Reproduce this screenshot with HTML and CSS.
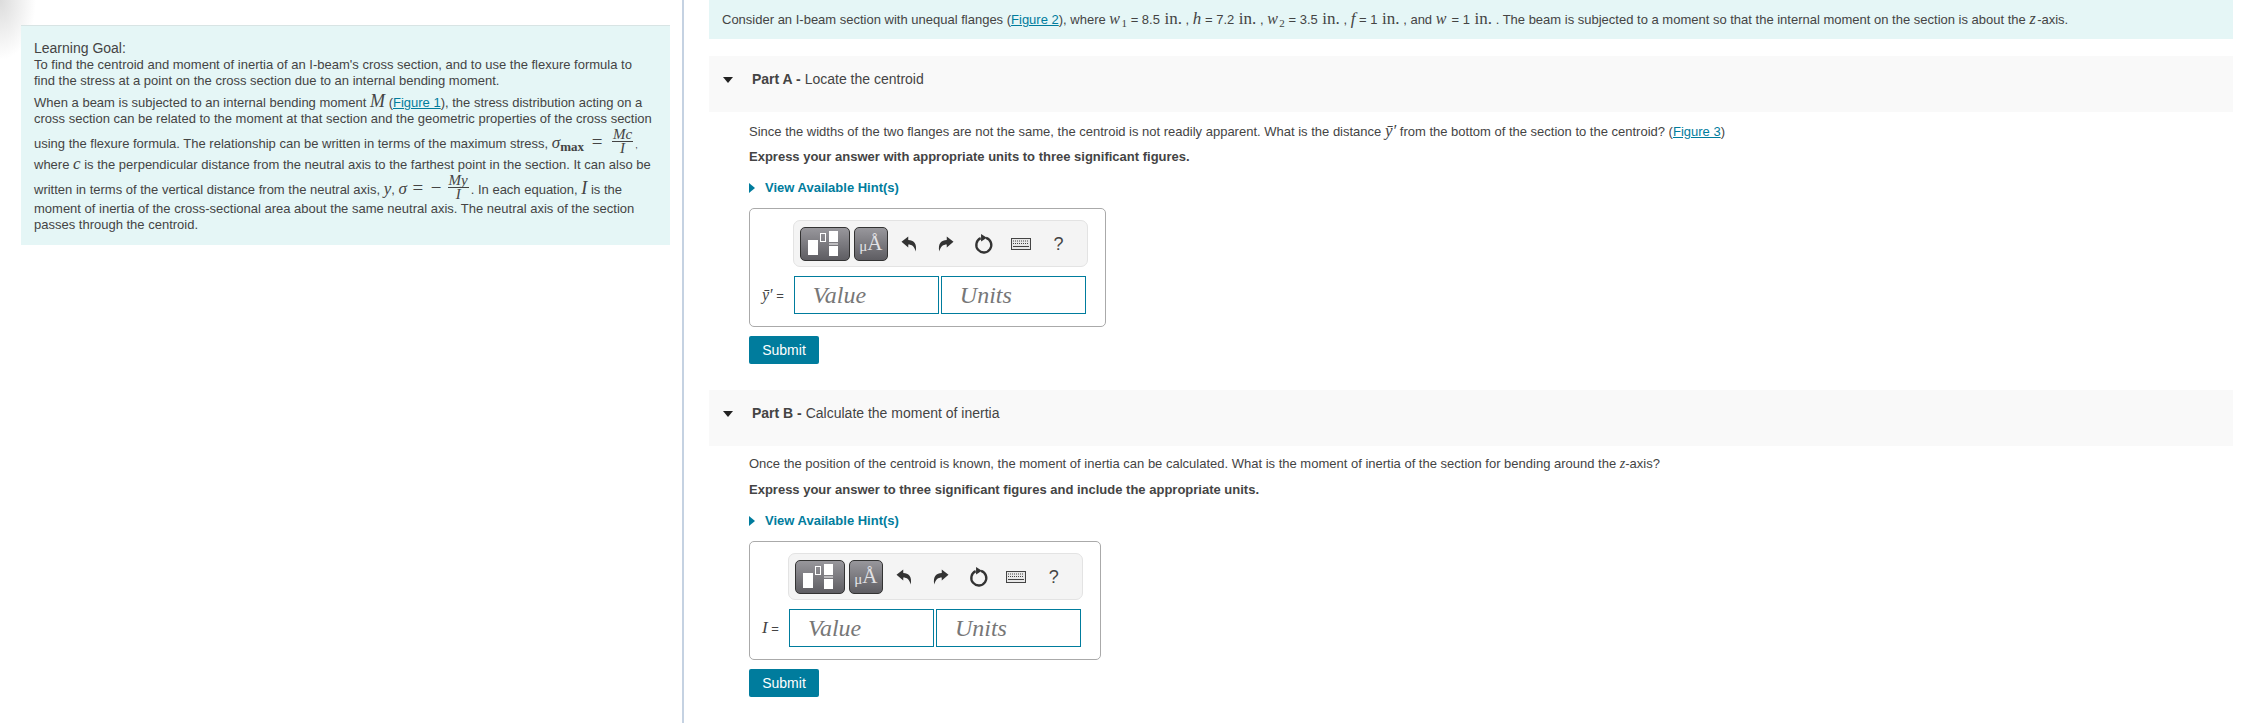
FILE: index.html
```html
<!DOCTYPE html>
<html>
    <head>
        <title>I-beam centroid and moment of inertia</title>
        <link rel="stylesheet" href="styles.css">
    </head>
    <body>
        <!-- Shared toolbar icons -->
        <svg class="defs" width="0" height="0">
            <symbol id="icon-templates" viewBox="0 0 48 32">
                <rect x="7" y="12" width="10" height="15" fill="#fff" />
                <rect x="19.5" y="5.5" width="5" height="8" fill="none" stroke="#fff" />
                <rect x="28" y="3" width="9" height="11" fill="#fff" />
                <rect x="28" y="15.5" width="9" height="1" fill="#fff" />
                <rect x="28" y="18" width="9" height="10" fill="#fff" />
            </symbol>
            <symbol id="icon-undo" viewBox="0 0 24 24">
                <path d="M2 9 L11 2 V6.500 C18 6.500 23 11 21 22 C19 15 16 12.500 11 12.500 V16.500 Z" />
            </symbol>
            <symbol id="icon-reset" viewBox="0 0 24 24">
                <path d="M14.500 4.600 A9 9 0 1 1 8 5" fill="none" stroke="currentColor" stroke-width="2.800" />
                <path d="M8.500 0 L15.500 4.500 L8.500 9 Z" />
            </symbol>
            <symbol id="icon-keyboard" viewBox="0 0 20 12">
                <rect x="0.500" y="0.500" width="19" height="11" fill="#e8e8e8" stroke="#444" />
                <path d="M2 3 H18 M2 5.500 H18" stroke="#444" stroke-dasharray="1 1" />
                <path d="M2 8.500 H18" stroke="#444" />
            </symbol>
        </svg>

        <div class="page">
            <div class="left-col">
                <div class="intro">
                    <div class="goal">
                        <span class="goal-title">Learning Goal:</span><br />
                        To find the centroid and moment of inertia of an I-beam's cross section, and to use the flexure formula to<br />
                        find the stress at a point on the cross section due to an internal bending moment.
                    </div>
                    <p>
                        When a beam is subjected to an internal bending moment <span class="m huge">M</span> (<a href="#">Figure 1</a>), the stress distribution acting on a<br />
                        cross section can be related to the moment at that section and the geometric properties of the cross section<br />
                        using the flexure formula. The relationship can be written in terms of the maximum stress, <span class="m big">σ</span><span class="m-sub">max</span> <span class="eq">=</span>
                        <span class="frac"><span class="num">Mc</span><span class="den">I</span></span><span class="tiny">,</span><br />
                        where <span class="m big">c</span> is the perpendicular distance from the neutral axis to the farthest point in the section. It can also be<br />
                        written in terms of the vertical distance from the neutral axis, <span class="m big">y</span>, <span class="m big">σ</span> <span class="eq">=</span> <span class="eq">−</span><span class="frac"><span class="num">My</span><span class="den">I</span></span>. In each equation, <span class="m huge">I</span> is the<br />
                        moment of inertia of the cross-sectional area about the same neutral axis. The neutral axis of the section<br />
                        passes through the centroid.
                    </p>
                </div>
            </div>

            <div class="right-col">
                <div class="intro-bar">
                    Consider an I-beam section with unequal flanges (<a href="#">Figure 2</a>), where <span class="m wide">w</span><span class="m-idx">1</span> = 8.5 <span class="m-up">in.</span> , <span class="m big">h</span> = 7.2 <span class="m-up">in.</span> , <span class="m wide">w</span><span class="m-idx">2</span> = 3.5 <span class="m-up">in.</span> , <span class="m big">f</span> = 1 <span class="m-up">in.</span> , and <span class="m wide">w</span> = 1 <span class="m-up">in.</span> . The beam is subjected to a moment so that the internal moment on the section is about the <span class="m wide">z</span>-axis.
                </div>

                <section class="part part-a">
                    <div class="part-head"><b>Part A -</b> Locate the centroid</div>
                    <div class="part-body">
                        <p>Since the widths of the two flanges are not the same, the centroid is not readily apparent. What is the distance <span class="m big">ȳ′</span> from the bottom of the section to the centroid? (<a href="#">Figure 3</a>)</p>
                        <p class="bold">Express your answer with appropriate units to three significant figures.</p>
                        <a class="hints" href="#">View Available Hint(s)</a>
                        <div class="answer-box">
                            <div class="toolbar">
                                <button class="tool-btn tpl"><svg width="48" height="32"><use href="#icon-templates" /></svg></button>
                                <button class="tool-btn units"><span class="mu">μ</span><span class="ang">Å</span></button>
                                <span class="slot"><svg width="18" height="18"><use href="#icon-undo" /></svg></span>
                                <span class="slot"><svg class="flip" width="18" height="18"><use href="#icon-undo" /></svg></span>
                                <span class="slot"><svg width="20" height="20"><use href="#icon-reset" /></svg></span>
                                <span class="slot"><svg width="20" height="12"><use href="#icon-keyboard" /></svg></span>
                                <span class="slot help">?</span>
                            </div>
                            <div class="ans-label"><span class="m wide">ȳ′</span> =</div>
                            <div class="inputs">
                                <input type="text" placeholder="Value" />
                                <input type="text" placeholder="Units" />
                            </div>
                        </div>
                        <button class="submit">Submit</button>
                    </div>
                </section>

                <section class="part part-b">
                    <div class="part-head"><b>Part B -</b> Calculate the moment of inertia</div>
                    <div class="part-body">
                        <p>Once the position of the centroid is known, the moment of inertia can be calculated. What is the moment of inertia of the section for bending around the <span class="m">z</span>-axis?</p>
                        <p class="bold">Express your answer to three significant figures and include the appropriate units.</p>
                        <a class="hints" href="#">View Available Hint(s)</a>
                        <div class="answer-box">
                            <div class="toolbar">
                                <button class="tool-btn tpl"><svg width="48" height="32"><use href="#icon-templates" /></svg></button>
                                <button class="tool-btn units"><span class="mu">μ</span><span class="ang">Å</span></button>
                                <span class="slot"><svg width="18" height="18"><use href="#icon-undo" /></svg></span>
                                <span class="slot"><svg class="flip" width="18" height="18"><use href="#icon-undo" /></svg></span>
                                <span class="slot"><svg width="20" height="20"><use href="#icon-reset" /></svg></span>
                                <span class="slot"><svg width="20" height="12"><use href="#icon-keyboard" /></svg></span>
                                <span class="slot help">?</span>
                            </div>
                            <div class="ans-label"><span class="m big">I</span> =</div>
                            <div class="inputs">
                                <input type="text" placeholder="Value" />
                                <input type="text" placeholder="Units" />
                            </div>
                        </div>
                        <button class="submit">Submit</button>
                    </div>
                </section>
            </div>
        </div>
    </body>
</html>
```

FILE: styles.css
```css
body {
    margin: 0;
    font-family: "Liberation Sans", Arial, sans-serif;
    font-size: 13px;
    line-height: 16px;
    color: #444;
    background: #fff;
}
a {
    color: #007c9d;
}
p {
    margin: 0;
}
.defs {
    display: block;
    height: 0;
}
.page {
    display: flex;
    min-height: 723px;
}
.left-col {
    width: 684px;
    flex: none;
    box-sizing: border-box;
    padding: 25px 12px 0 21px;
    border-right: 2px solid #c5d2e2;
    background: radial-gradient(ellipse 36px 60px at 0 0, #dcdcdc, rgba(255, 255, 255, 0));
}
.intro {
    box-sizing: border-box;
    height: 220px;
    padding: 14px 13px 0;
    background: #e5f6f6;
    border-top: 1px solid #d8e4e4;
}
.goal {
    margin-bottom: 5px;
}
.goal-title {
    font-size: 14px;
}
.m {
    font-family: "Liberation Serif", serif;
    font-style: italic;
    font-size: 14px;
    line-height: 1;
}
.m.big {
    font-size: 17px;
}
.m.wide {
    font-size: 16px;
    margin-right: 1.500px;
}
.m.huge {
    font-size: 18px;
    line-height: 14px;
}
.m-up {
    font-family: "Liberation Serif", serif;
    font-size: 17px;
    line-height: 1;
    margin-left: 1px;
}
.m-idx {
    font-family: "Liberation Serif", serif;
    font-size: 11px;
    line-height: 1;
    vertical-align: -3px;
}
.m-sub {
    font-family: "Liberation Serif", serif;
    font-weight: bold;
    font-size: 13px;
    line-height: 1;
    vertical-align: -3px;
    margin-right: 2px;
}
.eq {
    font-family: "Liberation Serif", serif;
    font-size: 19px;
    line-height: 1;
    margin: 0 2px;
}
.tiny {
    font-size: 9px;
}
.frac {
    display: inline-flex;
    flex-direction: column;
    text-align: center;
    vertical-align: 9px;
    margin: 0 2px 0 4px;
    font-family: "Liberation Serif", serif;
    font-style: italic;
    font-size: 15px;
}
.num {
    line-height: 14px;
    padding: 0 1px;
    border-bottom: 1px solid #444;
}
.den {
    line-height: 13px;
}
.right-col {
    flex: 1;
    padding-right: 15px;
}
.intro-bar {
    box-sizing: border-box;
    height: 39px;
    margin-left: 25px;
    padding: 10px 13px 0;
    background: #e5f6f6;
}
.part {
    margin-left: 25px;
}
.part-a {
    margin-top: 17px;
}
.part-b {
    margin-top: 26px;
}
.part-head {
    position: relative;
    box-sizing: border-box;
    height: 56px;
    padding: 15px 0 0 43px;
    background: #f9f9f9;
    font-size: 14px;
}
.part-head::before {
    content: "";
    position: absolute;
    left: 14px;
    top: 21px;
    border-left: 5px solid transparent;
    border-right: 5px solid transparent;
    border-top: 6px solid #222;
}
.part-body {
    padding: 10px 0 0 40px;
}
.part-body p {
    margin-bottom: 9px;
}
.part-b .part-body p {
    margin-bottom: 10px;
}
.bold {
    font-weight: bold;
}
.hints {
    display: block;
    position: relative;
    margin-top: 15px;
    padding-left: 16px;
    font-weight: bold;
    text-decoration: none;
}
.hints::before {
    content: "";
    position: absolute;
    left: 0;
    top: 3px;
    border-top: 5px solid transparent;
    border-bottom: 5px solid transparent;
    border-left: 6px solid #007c9d;
}
.answer-box {
    display: grid;
    grid-template-columns: auto auto;
    grid-template-rows: auto auto;
    width: fit-content;
    margin-top: 12px;
    padding: 11px 17px 12px 12px;
    border: 1px solid #aaa;
    border-radius: 5px;
    row-gap: 9px;
    column-gap: 10px;
    align-items: center;
}
.toolbar {
    grid-column: 2;
    display: flex;
    align-items: center;
    box-sizing: border-box;
    width: 295px;
    height: 47px;
    margin-left: -1px;
    padding-left: 6px;
    background: #f4f4f4;
    border: 1px solid #e3e3e3;
    border-radius: 7px;
}
.tool-btn {
    display: flex;
    align-items: center;
    justify-content: center;
    box-sizing: border-box;
    height: 34px;
    padding: 0;
    border: 1px solid #333;
    border-radius: 5px;
    background: linear-gradient(#98979c, #5e5d62);
    color: #e2e2e5;
    font-family: "Liberation Serif", serif;
}
.tpl {
    width: 50px;
    margin-right: 4px;
}
.units {
    width: 34px;
    margin-right: 2px;
}
.mu {
    font-size: 15px;
    margin-top: 6px;
}
.ang {
    font-size: 21px;
}
.slot {
    display: flex;
    align-items: center;
    justify-content: center;
    width: 37.500px;
    height: 34px;
    color: #333;
    fill: #333;
}
.flip {
    transform: scaleX(-1);
}
.help {
    font-size: 18px;
    color: #444;
}
.ans-label {
    grid-column: 1;
    grid-row: 2;
}
.ans-label .m.wide {
    margin-right: 0;
}
.inputs {
    grid-column: 2;
    display: flex;
    gap: 2px;
}
.inputs input {
    box-sizing: border-box;
    width: 145px;
    height: 38px;
    padding: 0 0 0 18px;
    border: 1px solid #007c9d;
    border-radius: 0;
    font-family: "Liberation Serif", serif;
    font-style: italic;
    font-size: 24px;
    color: #777;
}
.inputs input::placeholder {
    color: #777;
    opacity: 1;
}
.submit {
    display: block;
    box-sizing: border-box;
    width: 70px;
    height: 28px;
    margin-top: 9px;
    padding: 0;
    border: none;
    border-radius: 2px;
    background: #007c9d;
    color: #fff;
    font-family: "Liberation Sans", Arial, sans-serif;
    font-size: 14px;
}
```
